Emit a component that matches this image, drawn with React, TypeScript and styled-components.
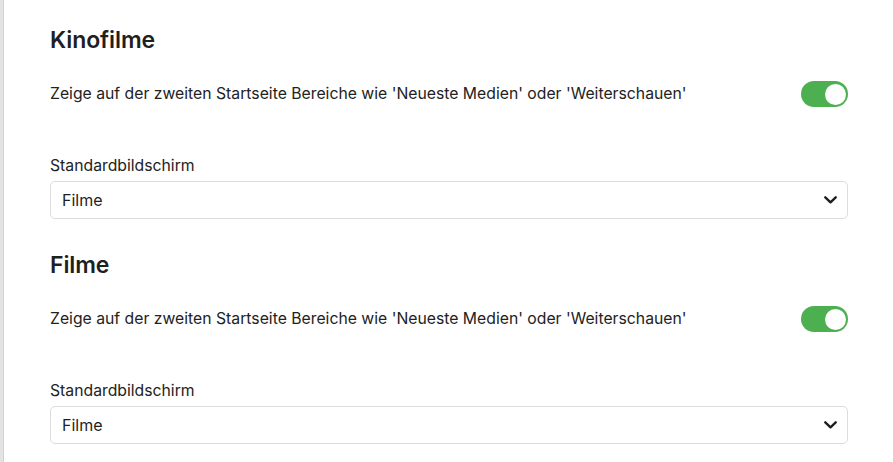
import React from 'react';
import styled, { createGlobalStyle } from 'styled-components';

const GlobalStyle = createGlobalStyle`
  html, body {
    margin: 0;
    padding: 0;
    background: #ffffff;
  }
  body {
    font-family: Inter, "Noto Sans", "Liberation Sans", sans-serif;
    color: #222222;
  }
`;

const Page = styled.div`
  min-height: 462px;
  border-left: 3px solid #e3e3e3;
  box-shadow: inset 1px 0 0 #d0d0d0;
  padding: 26px 45px 0 47px;
  box-sizing: border-box;
`;

const Section = styled.section`
  display: flex;
  flex-direction: column;
  margin-bottom: 32px;
`;

const Heading = styled.h2`
  margin: 0;
  font-size: 23px;
  line-height: 28px;
  font-weight: 600;
  color: #1f1f1f;
  letter-spacing: -0.1px;
`;

const ToggleRow = styled.div`
  display: flex;
  align-items: center;
  justify-content: space-between;
  margin-top: 27px;
`;

const Description = styled.span`
  font-size: 15.75px;
  line-height: 20px;
  color: #222222;
`;

const Switch = styled.button<{ $on: boolean }>`
  position: relative;
  width: 47px;
  height: 26px;
  border: none;
  border-radius: 13px;
  padding: 0;
  background: ${(p) => (p.$on ? '#4caf50' : '#cccccc')};
  cursor: pointer;
  flex-shrink: 0;
`;

const Knob = styled.span<{ $on: boolean }>`
  position: absolute;
  top: 2.5px;
  left: ${(p) => (p.$on ? '23.5px' : '2.5px')};
  width: 21px;
  height: 21px;
  border-radius: 50%;
  background: #ffffff;
`;

const Field = styled.div`
  display: flex;
  flex-direction: column;
  margin-top: 49px;
`;

const Label = styled.label`
  font-size: 15.75px;
  line-height: 20px;
  color: #222222;
  margin-bottom: 5px;
`;

const SelectBox = styled.div`
  position: relative;
  display: flex;
  align-items: center;
  justify-content: space-between;
  height: 38px;
  box-sizing: border-box;
  border: 1px solid #dcdcdc;
  border-radius: 5px;
  padding: 0 10px 0 11px;
  font-size: 16px;
  color: #1f1f1f;
  background: #ffffff;
`;

const Chevron = () => (
  <svg width="13" height="8" viewBox="0 0 13 8" fill="none">
    <path d="M1.3 1.3 L6.5 6.3 L11.7 1.3" stroke="#1f1f1f" strokeWidth="2.4" strokeLinecap="round" strokeLinejoin="round" />
  </svg>
);

interface SettingsSectionProps {
  title: string;
  description: string;
  label: string;
  value: string;
}

const SettingsSection = (props: SettingsSectionProps) => {
  const [on, setOn] = React.useState(true);
  return (
    <Section>
      <Heading>{props.title}</Heading>
      <ToggleRow>
        <Description>{props.description}</Description>
        <Switch $on={on} onClick={() => setOn(!on)} aria-pressed={on}>
          <Knob $on={on} />
        </Switch>
      </ToggleRow>
      <Field>
        <Label>{props.label}</Label>
        <SelectBox>
          <span>{props.value}</span>
          <Chevron />
        </SelectBox>
      </Field>
    </Section>
  );
};

const desc = "Zeige auf der zweiten Startseite Bereiche wie 'Neueste Medien' oder 'Weiterschauen'";

export default function App() {
  return (
    <>
      <GlobalStyle />
      <Page>
        <SettingsSection title="Kinofilme" description={desc} label="Standardbildschirm" value="Filme" />
        <SettingsSection title="Filme" description={desc} label="Standardbildschirm" value="Filme" />
      </Page>
    </>
  );
}
